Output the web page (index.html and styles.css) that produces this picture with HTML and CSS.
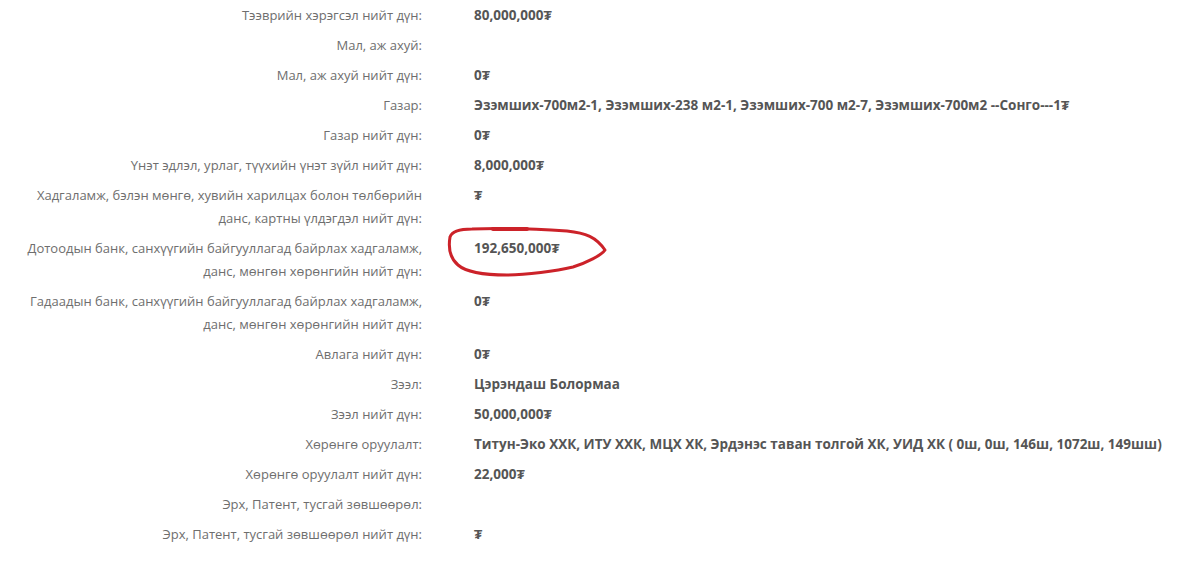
FILE: index.html
```html
<!DOCTYPE html>
<html lang="mn">
<head>
<meta charset="utf-8">
<link rel="stylesheet" href="styles.css">
</head>
<body>
<div class="sheet">
  <div class="row"><div class="label">Тээврийн хэрэгсэл нийт дүн:</div><div class="value">80,000,000₮</div></div>
  <div class="row"><div class="label">Мал, аж ахуй:</div><div class="value"></div></div>
  <div class="row"><div class="label">Мал, аж ахуй нийт дүн:</div><div class="value">0₮</div></div>
  <div class="row"><div class="label">Газар:</div><div class="value">Эзэмших-700м2-1, Эзэмших-238 м2-1, Эзэмших-700 м2-7, Эзэмших-700м2 --Сонго---1₮</div></div>
  <div class="row"><div class="label">Газар нийт дүн:</div><div class="value">0₮</div></div>
  <div class="row"><div class="label">Үнэт эдлэл, урлаг, түүхийн үнэт зүйл нийт дүн:</div><div class="value">8,000,000₮</div></div>
  <div class="row"><div class="label">Хадгаламж, бэлэн мөнгө, хувийн харилцах болон төлбөрийн<br>данс, картны үлдэгдэл нийт дүн:</div><div class="value">₮</div></div>
  <div class="row"><div class="label">Дотоодын банк, санхүүгийн байгууллагад байрлах хадгаламж,<br>данс, мөнгөн хөрөнгийн нийт дүн:</div><div class="value marked">192,650,000₮<svg class="scribble" viewBox="0 0 170 66" width="170" height="66"><path d="M4 22 C6 16 14 14 26 14 C50 13 90 14 121 16 C140 18 150 22 159 35 C156 40 140 48 127 52 C110 56 80 60 61 60 C40 60 20 57 12 50 C5 44 2 34 4 22" fill="none" stroke="#cc2229" stroke-width="3" stroke-linecap="round" stroke-linejoin="round"/><path d="M47 14 L81 14" stroke="#cc2229" stroke-width="4" stroke-linecap="round"/></svg></div></div>
  <div class="row"><div class="label">Гадаадын банк, санхүүгийн байгууллагад байрлах хадгаламж,<br>данс, мөнгөн хөрөнгийн нийт дүн:</div><div class="value">0₮</div></div>
  <div class="row"><div class="label">Авлага нийт дүн:</div><div class="value">0₮</div></div>
  <div class="row"><div class="label">Зээл:</div><div class="value">Цэрэндаш Болормаа</div></div>
  <div class="row"><div class="label">Зээл нийт дүн:</div><div class="value">50,000,000₮</div></div>
  <div class="row"><div class="label">Хөрөнгө оруулалт:</div><div class="value">Титун-Эко ХХК, ИТУ ХХК, МЦХ ХК, Эрдэнэс таван толгой ХК, УИД ХК ( 0ш, 0ш, 146ш, 1072ш, 149шш)</div></div>
  <div class="row"><div class="label">Хөрөнгө оруулалт нийт дүн:</div><div class="value">22,000₮</div></div>
  <div class="row"><div class="label">Эрх, Патент, тусгай зөвшөөрөл:</div><div class="value"></div></div>
  <div class="row"><div class="label">Эрх, Патент, тусгай зөвшөөрөл нийт дүн:</div><div class="value">₮</div></div>
</div>
</body>
</html>
```
FILE: styles.css
```css
html, body {
  margin: 0;
  padding: 0;
  background: #ffffff;
}
.sheet {
  padding-top: 4px;
  display: flex;
  flex-direction: column;
}
.row {
  display: grid;
  grid-template-columns: 422px 1fr;
  column-gap: 52px;
  padding-bottom: 7px;
  line-height: 23px;
}
.label {
  text-align: right;
  color: #6e6e6e;
  font-family: "Open Sans", "Liberation Sans", sans-serif;
  font-size: 13px;
}
.value {
  color: #555555;
  font-family: "Open Sans", "Liberation Sans", sans-serif;
  font-weight: 700;
  font-size: 13.5px;
  white-space: nowrap;
}
.marked {
  position: relative;
}
.scribble {
  position: absolute;
  left: -28px;
  top: -22px;
  pointer-events: none;
}
```
